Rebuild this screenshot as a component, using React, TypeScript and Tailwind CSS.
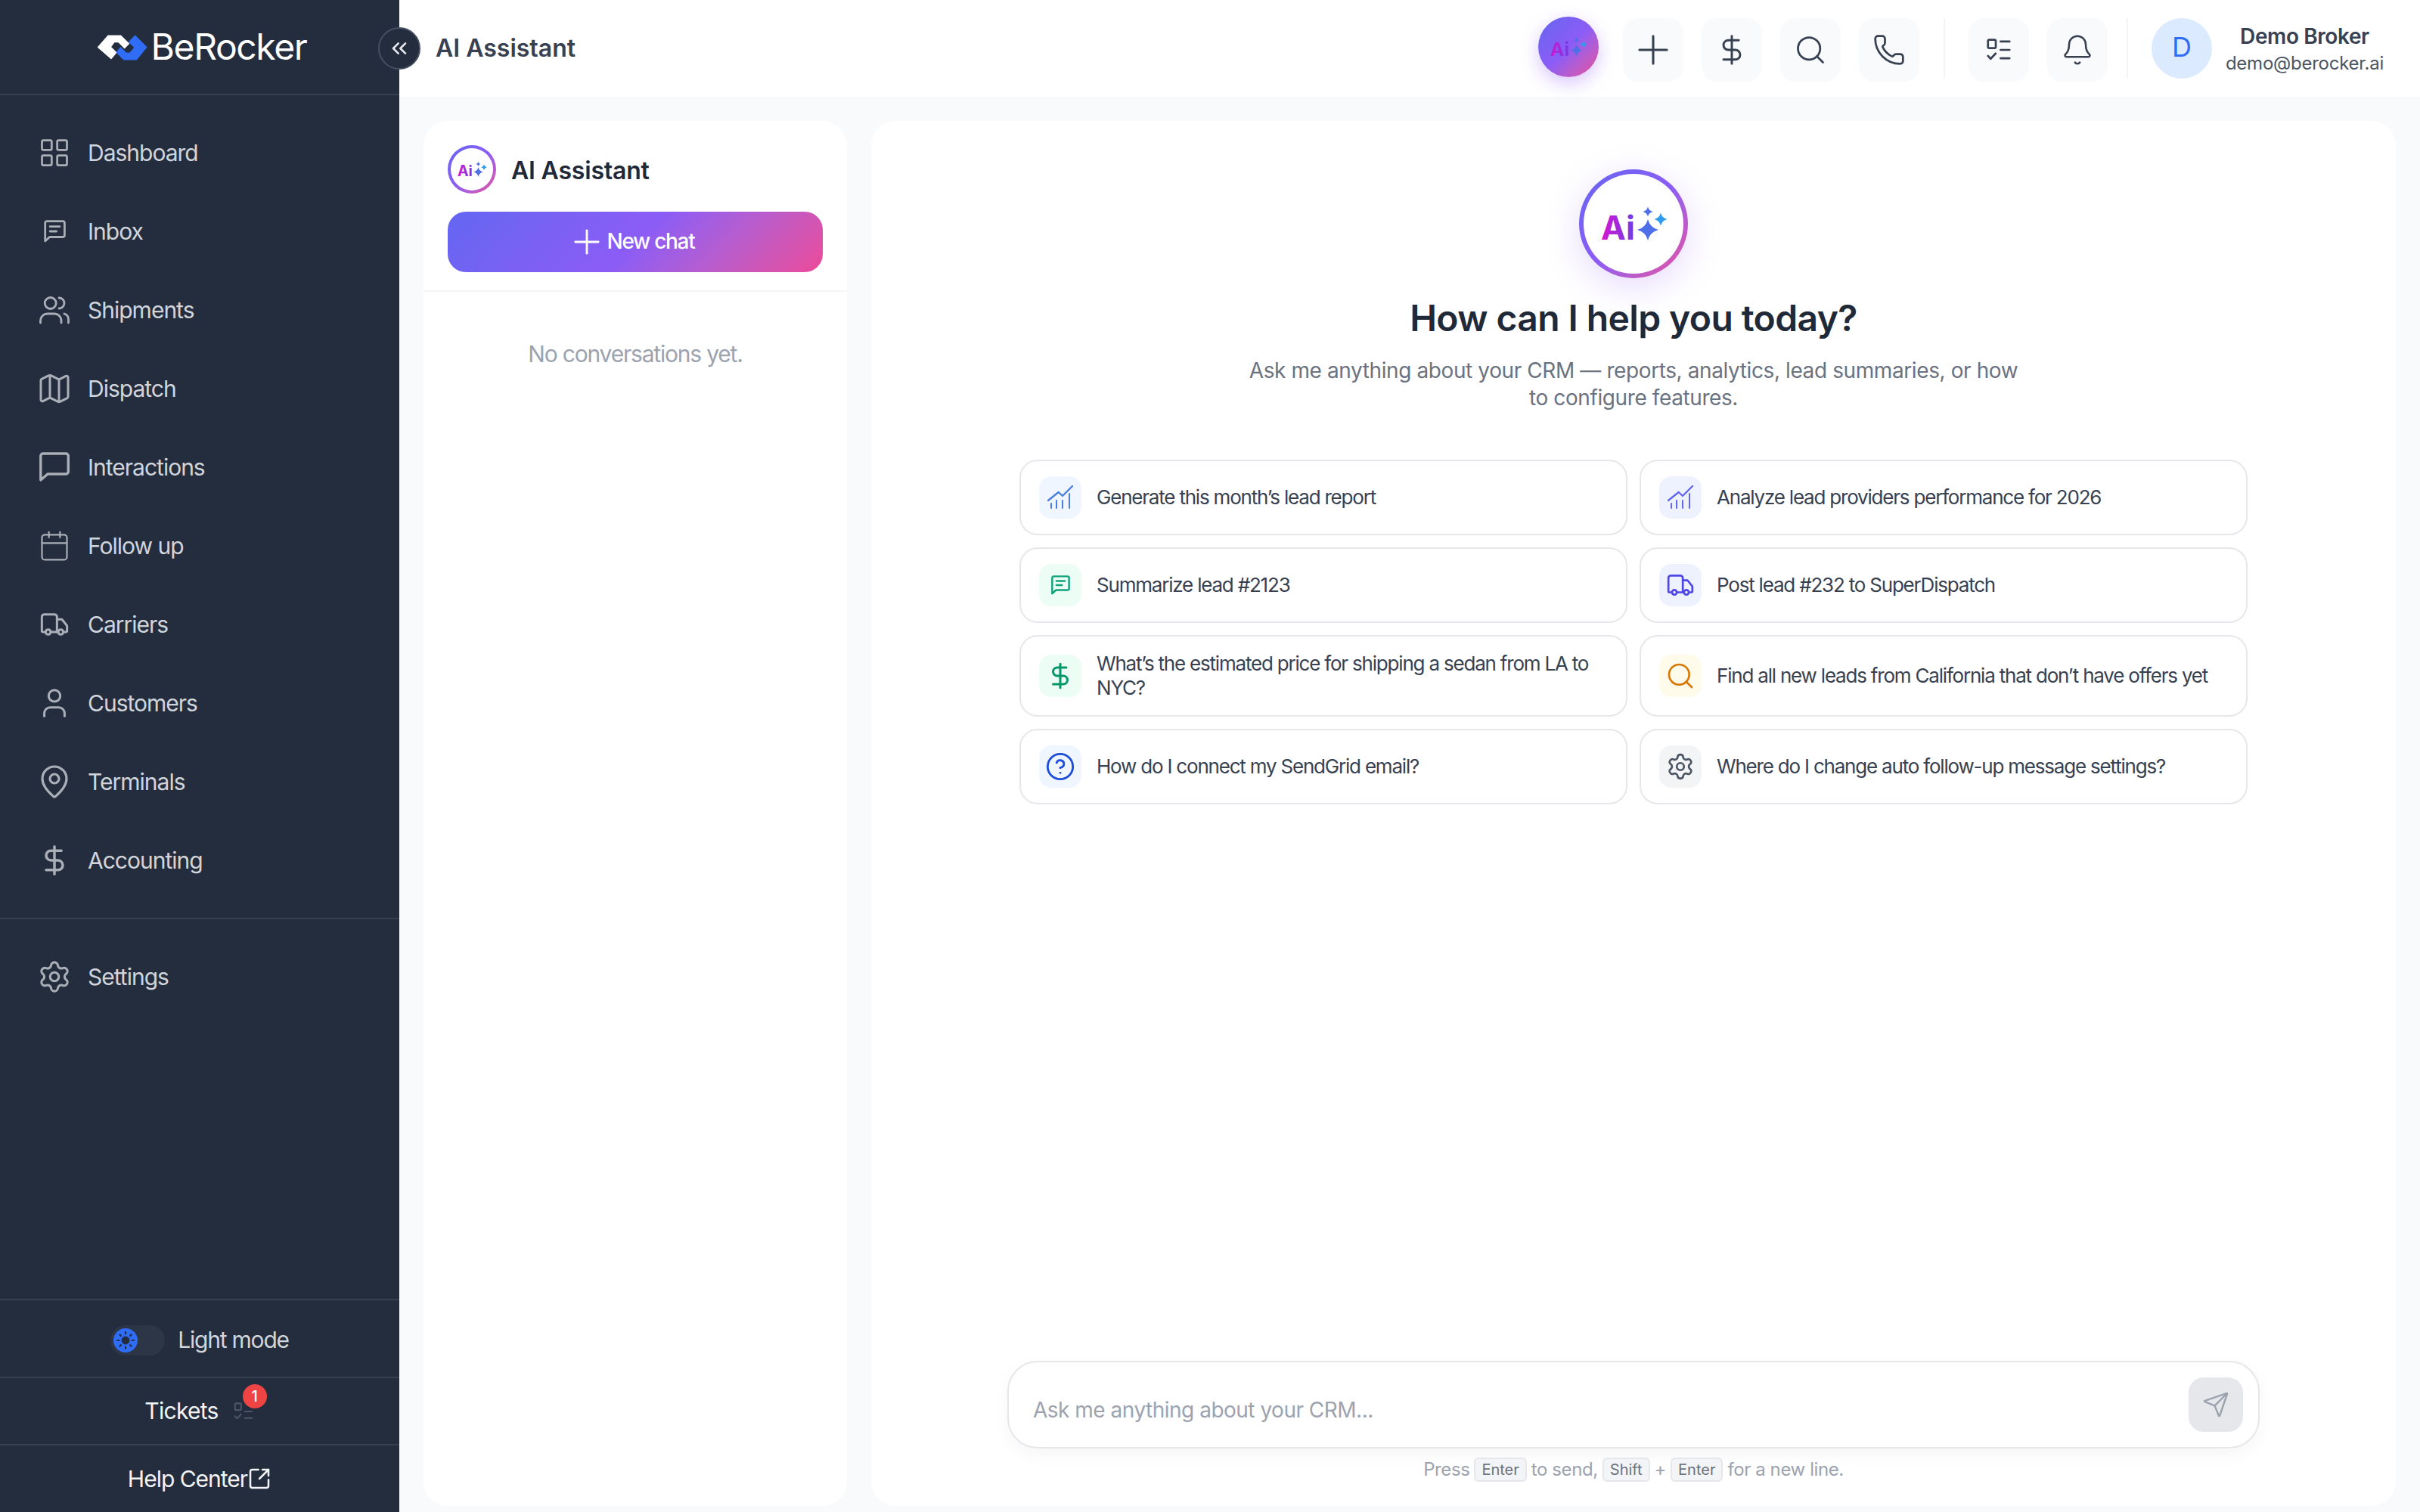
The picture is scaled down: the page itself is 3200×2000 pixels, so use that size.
import { ChevronsLeft, Bell, CircleHelp, DollarSign, LayoutGrid, Map, MapPin, Phone, Plus, Search, Send, Settings, SquareArrowOutUpRight, Sun, Truck, User, Calendar } from "lucide-react"
import type { ReactNode } from "react"

// small hand drawn icons that lucide doesn't have in this shape
function ChatLines({ size = 36, className = "" }: { size?: number; className?: string }) {
  return (
    <svg width={size} height={size} viewBox="0 0 28 28" fill="none" stroke="currentColor" strokeWidth="2.6" strokeLinecap="round" strokeLinejoin="round" className={className}>
      <path d="M2.5 26V3.5a2 2 0 0 1 2-2h20a2 2 0 0 1 2 2V19a2 2 0 0 1-2 2H8z" />
      <path d="M8.5 8h12M8.5 14h8" />
    </svg>
  )
}

function PeopleIcon() {
  return (
    <svg width="40" height="38" viewBox="0 0 40 38" fill="none" stroke="currentColor" strokeWidth="2.8" strokeLinecap="round">
      <circle cx="14.7" cy="10" r="7.5" />
      <path d="M26 3a7 7 0 0 1 0 14" />
      <path d="M1.5 36v-3a9 9 0 0 1 9-9h9a9 9 0 0 1 9.5 9v3" />
      <path d="M33 24a8 8 0 0 1 5.5 8v4" />
    </svg>
  )
}

function BubbleIcon() {
  return (
    <svg width="40" height="40" viewBox="0 0 40 40" fill="none" stroke="currentColor" strokeWidth="3.4" strokeLinecap="round" strokeLinejoin="round">
      <path d="M1.8 37V5a3 3 0 0 1 3-3h30.5a3 3 0 0 1 3 3v21a3 3 0 0 1-3 3H11z" />
    </svg>
  )
}

function TaskList({ size = 36, lines = 3, className = "" }: { size?: number; lines?: number; className?: string }) {
  return (
    <svg width={size} height={size} viewBox="0 0 24 24" fill="none" stroke="currentColor" strokeWidth="1.7" strokeLinecap="round" strokeLinejoin="round" className={className}>
      <rect x="3" y="3.5" width="6.5" height="7" rx="1" />
      <path d="m3 17 2.2 2.4L9.4 15" />
      {lines === 3 && <path d="M13.5 5H21" />}
      <path d="M13.5 12H21M13.5 19H21" />
    </svg>
  )
}

function ChartIcon() {
  return (
    <svg width="34" height="32" viewBox="-1 -1 34 32" fill="none" stroke="currentColor" strokeWidth="2" strokeLinecap="round" strokeLinejoin="round">
      <path d="M0 19 13.7 8 19 13 32 0" strokeWidth="2.4" />
      <path d="M4 23v6M11 19v10M19 19v10M28 10v19" />
    </svg>
  )
}

function Logo() {
  return (
    <svg width="70" height="37" viewBox="20 40 210 110">
      <path d="M28 95 68 49h50l32 32-17 17-24-24H92L78 94l22 22-20 24z" fill="#fff" stroke="#fff" strokeWidth="4" strokeLinejoin="round" />
      <path d="M220 95 175 49l-24 25 22 22-18 22h-16l-22-22-15 19 28 29h50z" fill="#2f6df6" stroke="#2f6df6" strokeWidth="4" strokeLinejoin="round" />
    </svg>
  )
}

function star(cx: number, cy: number, r: number) {
  const k = r * 0.2
  return `M${cx} ${cy - r}Q${cx + k} ${cy - k} ${cx + r} ${cy}Q${cx + k} ${cy + k} ${cx} ${cy + r}Q${cx - k} ${cy + k} ${cx - r} ${cy}Q${cx - k} ${cy - k} ${cx} ${cy - r}z`
}

function AiGlyph({ id, size }: { id: string; size: number }) {
  return (
    <svg width={size} height={size} viewBox="0 0 144 144" className="shrink-0">
      <defs>
        <linearGradient id={id} x1="0" x2="1" y1="0" y2="0">
          <stop offset="0" stopColor="#d516d0" />
          <stop offset="1" stopColor="#6d3fe6" />
        </linearGradient>
      </defs>
      <text x="29" y="93" fontSize="44" fontWeight="700" fontFamily="Inter, sans-serif" fill={`url(#${id})`}>Ai</text>
      <path d={star(91, 80, 14)} fill="#4f6fe8" />
      <path d={star(91, 56, 6.5)} fill="#4f6fe8" />
      <path d={star(108, 66, 8.5)} fill="#2f9cf0" />
    </svg>
  )
}

const navItems: { label: string; icon: ReactNode }[] = [
  { label: "Dashboard", icon: <LayoutGrid size={44} strokeWidth={1.5} /> },
  { label: "Inbox", icon: <ChatLines size={30} /> },
  { label: "Shipments", icon: <PeopleIcon /> },
  { label: "Dispatch", icon: <Map size={50} strokeWidth={1.5} /> },
  { label: "Interactions", icon: <BubbleIcon /> },
  { label: "Follow up", icon: <Calendar size={44} strokeWidth={1.2} /> },
  { label: "Carriers", icon: <Truck size={40} strokeWidth={1.8} /> },
  { label: "Customers", icon: <User size={46} strokeWidth={1.6} /> },
  { label: "Terminals", icon: <MapPin size={48} strokeWidth={1.6} /> },
  { label: "Accounting", icon: <DollarSign size={44} strokeWidth={1.9} /> },
]

function NavRow({ label, icon }: { label: string; icon: ReactNode }) {
  return (
    <div className="flex h-[104px] items-center gap-[20px] pl-[48px]">
      <div className="flex w-[48px] items-center justify-center text-[#a9aeb7]">{icon}</div>
      <span className="text-[30px] tracking-[-1px] text-[#d1d5db]">{label}</span>
    </div>
  )
}

function Sidebar() {
  return (
    <aside className="flex w-[528px] shrink-0 flex-col bg-[#242d3e]">
      <div className="flex h-[126px] items-center justify-center gap-[3px] border-b-2 border-[#363f4f] pl-[4px]">
        <Logo />
        <span className="text-[48px] leading-none tracking-[-1.4px] text-white">BeRocker</span>
      </div>

      <nav className="border-b-2 border-[#363f4f] py-[24px]">
        {navItems.map((item) => (
          <NavRow key={item.label} {...item} />
        ))}
      </nav>
      <div className="pt-[24px]">
        <NavRow label="Settings" icon={<Settings size={46} strokeWidth={1.6} />} />
      </div>

      <div className="mt-auto">
        <div className="flex h-[103px] items-center justify-center gap-[17px] border-t-2 border-[#363f4f] pt-[4px]">
          <div className="flex h-[40px] w-[72px] items-center rounded-full bg-[#2d3646] px-[4px]">
            <div className="flex h-[32px] w-[32px] items-center justify-center rounded-full bg-[#2f6df6] text-[#242d3e]">
              <Sun size={26} strokeWidth={2} fill="currentColor" />
            </div>
          </div>
          <span className="text-[30px] tracking-[-1.2px] text-[#d1d5db]">Light mode</span>
        </div>
        <div className="flex h-[89px] items-center justify-center gap-[18px] border-t-2 border-[#363f4f]">
          <span className="text-[30px] tracking-[-0.7px] text-[#f3f4f6]">Tickets</span>
          <div className="relative text-[#4b5563]">
            <TaskList size={30} lines={2} />
            <span className="absolute -top-[21px] left-[14px] flex h-[32px] w-[32px] items-center justify-center rounded-full bg-[#ef4444] text-[20px] font-medium text-white">1</span>
          </div>
        </div>
        <div className="flex h-[90px] items-center justify-center border-t-2 border-[#363f4f] text-[#f3f4f6]">
          <span className="text-[30px] tracking-[-1px]">Help Center</span>
          <SquareArrowOutUpRight size={32} strokeWidth={1.9} />
        </div>
      </div>
    </aside>
  )
}

function HeaderButton({ children }: { children: ReactNode }) {
  return <div className="mt-[3px] flex h-[84px] w-[80px] items-center justify-center rounded-[20px] bg-[#f9fafb] text-[#374151]">{children}</div>
}

function Header() {
  return (
    <header className="flex h-[128px] shrink-0 items-center bg-white pr-[48px] pl-[48px]">
      <h1 className="text-[32px] font-semibold text-[#374151]">AI Assistant</h1>
      <div className="ml-auto flex items-center">
        <div className="mr-[32px] -mt-[4px] flex h-[80px] w-[80px] items-center justify-center rounded-full bg-linear-135 from-[#6366f1] via-[#8b5cf6] to-[#ec4899] shadow-[0_8px_24px_rgba(139,92,246,0.35)]">
          <AiGlyph id="ai-head" size={80} />
        </div>
        <div className="flex gap-[24px]">
          <HeaderButton><Plus size={62} strokeWidth={1.2} /></HeaderButton>
          <HeaderButton><DollarSign size={44} strokeWidth={1.6} /></HeaderButton>
          <HeaderButton><Search size={44} strokeWidth={1.5} /></HeaderButton>
          <HeaderButton><Phone size={44} strokeWidth={1.5} /></HeaderButton>
        </div>
        <div className="mr-[31px] ml-[32px] h-[80px] w-[2px] bg-[#f3f4f6]" />
        <div className="flex gap-[24px]">
          <HeaderButton><TaskList size={38} /></HeaderButton>
          <HeaderButton><Bell size={44} strokeWidth={1.4} /></HeaderButton>
        </div>
        <div className="mr-[31px] ml-[25px] h-[80px] w-[2px] bg-[#f3f4f6]" />
        <div className="mr-[18px] flex h-[80px] w-[80px] items-center justify-center rounded-full bg-[#dbeafe] pb-[4px] text-[36px] text-[#2f6df6]">D</div>
        <div className="flex flex-col items-center pt-[4px]">
          <span className="text-[28px] leading-[36px] font-semibold tracking-[-0.4px] text-[#374151]">Demo Broker</span>
          <span className="text-[24px] leading-[36px] tracking-[-0.25px] text-[#4b5563]">demo@berocker.ai</span>
        </div>
      </div>
    </header>
  )
}

function ConversationPanel() {
  return (
    <section className="flex w-[560px] shrink-0 flex-col rounded-[32px] bg-white">
      <div className="border-b-2 border-[#f3f4f6] px-[32px] pt-[32px] pb-[24px]">
        <div className="mb-[24px] flex items-center gap-[20px]">
          <div className="h-[64px] w-[64px] rounded-full bg-linear-135 from-[#6366f1] via-[#8b5cf6] to-[#ec4899] p-[4px]">
            <div className="flex h-full w-full items-center justify-center rounded-full bg-white">
              <AiGlyph id="ai-side" size={64} />
            </div>
          </div>
          <span className="pt-[4px] text-[32px] font-semibold tracking-[-0.2px] text-[#1f2937]">AI Assistant</span>
        </div>
        <button className="flex h-[80px] w-full items-center justify-center gap-[1px] rounded-[24px] bg-linear-135 from-[#6366f1] via-[#8b5cf6] to-[#ec4899] pr-[12px] text-white">
          <Plus size={52} strokeWidth={1.3} />
          <span className="pb-[2px] text-[28px] font-medium tracking-[-1.3px]">New chat</span>
        </button>
      </div>
      <p className="mt-[62px] text-center text-[30px] leading-[40px] tracking-[-1.2px] text-[#9ca3af]">No conversations yet.</p>
    </section>
  )
}

const prompts: { text: string; icon: ReactNode; tint: string }[] = [
  { text: "Generate this month’s lead report", icon: <ChartIcon />, tint: "bg-[#eff6ff] text-[#4a7fe0]" },
  { text: "Analyze lead providers performance for 2026", icon: <ChartIcon />, tint: "bg-[#eef2ff] text-[#6366f1]" },
  { text: "Summarize lead #2123", icon: <ChatLines size={26} />, tint: "bg-[#ecfdf5] text-[#10a37a]" },
  { text: "Post lead #232 to SuperDispatch", icon: <Truck size={38} strokeWidth={1.7} />, tint: "bg-[#eef2ff] text-[#4f46e5]" },
  { text: "What’s the estimated price for shipping a sedan from LA to NYC?", icon: <DollarSign size={38} strokeWidth={1.9} />, tint: "bg-[#ecfdf5] text-[#059669]" },
  { text: "Find all new leads from California that don’t have offers yet", icon: <Search size={40} strokeWidth={1.6} />, tint: "bg-[#fffbeb] text-[#d97706]" },
  { text: "How do I connect my SendGrid email?", icon: <CircleHelp size={40} strokeWidth={1.7} />, tint: "bg-[#eff6ff] text-[#1d4ed8]" },
  { text: "Where do I change auto follow-up message settings?", icon: <Settings size={38} strokeWidth={1.7} />, tint: "bg-[#f3f4f6] text-[#4b5563]" },
]

function Kbd({ children }: { children: ReactNode }) {
  return <kbd className="mx-[6px] inline-flex h-[32px] items-center rounded-[6px] border-2 border-[#e5e7eb] bg-[#f3f4f6] px-[8px] font-[family-name:Inter,sans-serif] text-[20px] tracking-normal text-[#6b7280]">{children}</kbd>
}

function ChatPanel() {
  return (
    <section className="flex flex-1 flex-col items-center rounded-[32px] bg-white pt-[64px] pb-[32px]">
      <div className="h-[144px] w-[144px] rounded-full bg-linear-135 from-[#6366f1] via-[#8b5cf6] to-[#ec4899] p-[6px] shadow-[0_12px_48px_rgba(139,92,246,0.22)]">
        <div className="flex h-full w-full items-center justify-center rounded-full bg-white">
          <AiGlyph id="ai-hero" size={144} />
        </div>
      </div>
      <h2 className="mt-[21px] text-[48px] leading-[64px] font-semibold tracking-[-0.6px] text-[#1f2937]">How can I help you today?</h2>
      <p className="mt-[19px] w-[1040px] text-center text-[28px] leading-[36px] tracking-[-0.4px] text-[#6b7280]">
        Ask me anything about your CRM — reports, analytics, lead summaries, or how to configure features.
      </p>

      <div className="mt-[64px] grid w-[1624px] grid-cols-2 gap-[16px]">
        {prompts.map((p) => (
          <div key={p.text} className="flex items-center gap-[20px] rounded-[24px] border-2 border-[#e5e7eb] bg-white px-[24px] py-[20px]">
            <div className={`flex h-[56px] w-[56px] shrink-0 items-center justify-center rounded-[16px] ${p.tint}`}>{p.icon}</div>
            <span className="text-[26px] leading-[32px] tracking-[-1.2px] text-[#374151]">{p.text}</span>
          </div>
        ))}
      </div>

      <div className="mt-auto w-[1656px]">
        <div className="flex h-[116px] items-center justify-between rounded-[40px] border-2 border-[#e5e7eb] bg-white pr-[20px] pl-[32px] shadow-[0_8px_24px_rgba(0,0,0,0.04)]">
          <span className="pt-[14px] text-[28px] tracking-[-0.5px] text-[#9ca3af]">Ask me anything about your CRM...</span>
          <div className="flex h-[72px] w-[72px] items-center justify-center rounded-[20px] bg-[#e5e7eb] text-[#9ca3af]">
            <Send size={36} strokeWidth={1.6} />
          </div>
        </div>
        <p className="mt-[12px] flex h-[32px] items-center justify-center text-[24px] tracking-[-0.4px] text-[#9ca3af]">
          Press<Kbd>Enter</Kbd>to send,<Kbd>Shift</Kbd>+<Kbd>Enter</Kbd>for a new line.
        </p>
      </div>
    </section>
  )
}

export default function App() {
  return (
    <div className="relative flex h-[2000px] w-[3200px] overflow-hidden bg-[#f9fafb] font-[family-name:Inter,sans-serif]">
      <Sidebar />
      <div className="flex min-w-0 flex-1 flex-col">
        <Header />
        <main className="flex min-h-0 flex-1 gap-[32px] pt-[32px] pr-[32px] pb-[8px] pl-[32px]">
          <ConversationPanel />
          <ChatPanel />
        </main>
      </div>
      {/* collapse button sits over the sidebar edge */}
      <button className="absolute top-[36px] left-[500px] flex h-[56px] w-[56px] items-center justify-center rounded-full border-2 border-[#465063] bg-[#242d3e] text-[#e5e7eb]">
        <ChevronsLeft size={32} strokeWidth={2} />
      </button>
    </div>
  )
}
